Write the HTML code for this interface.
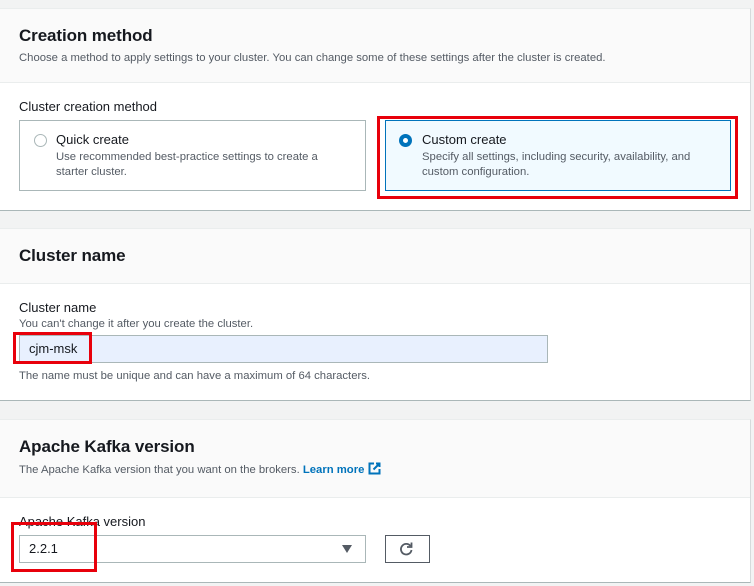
<!DOCTYPE html>
<html><head><meta charset="utf-8"><style>
*{box-sizing:border-box;margin:0;padding:0}
body{width:754px;height:586px;background:#f2f3f3;font-family:"Liberation Sans",sans-serif;color:#16191f;position:relative;overflow:hidden}
.p{position:absolute;left:0;width:751px;background:#fff;border-right:1px solid #d5dbdb;border-bottom:1px solid #aab7b8;border-top:1px solid #eaeded}
.h{background:#fafafa;border-bottom:1px solid #eaeded;position:absolute;left:0;right:0;top:0}
.t{position:absolute;left:19px;font-size:17px;font-weight:bold;letter-spacing:-0.1px}
.d{position:absolute;left:19px;font-size:11.3px;color:#545b64;white-space:nowrap}
.l{position:absolute;left:19px;font-size:13px;color:#16191f}
.a{position:absolute;white-space:nowrap}
.r{position:absolute;border:3px solid #e8000b}
</style></head><body>
<div class="p" style="top:8px;height:203px">
 <div class="h" style="height:74px"></div>
 <div class="t" style="top:17px">Creation method</div>
 <div class="d" style="top:43px">Choose a method to apply settings to your cluster. You can change some of these settings after the cluster is created.</div>
 <div class="l" style="top:90px">Cluster creation method</div>
 <div class="a" style="left:19px;top:111px;width:347px;height:71px;border:1px solid #aab7b8"></div>
 <div class="a" style="left:34px;top:125px;width:13px;height:13px;border:1px solid #aab7b8;border-radius:50%"></div>
 <div class="a" style="left:56px;top:123px;font-size:13px">Quick create</div>
 <div class="a" style="left:56px;top:141px;font-size:11.3px;color:#545b64;line-height:15px">Use recommended best-practice settings to create a<br>starter cluster.</div>
 <div class="a" style="left:385px;top:111px;width:346px;height:71px;border:1px solid #0073bb;background:#f1faff"></div>
 <div class="a" style="left:399px;top:125px;width:13px;height:13px;border:4px solid #0073bb;border-radius:50%;background:#fff"></div>
 <div class="a" style="left:422px;top:123px;font-size:13px">Custom create</div>
 <div class="a" style="left:422px;top:141px;font-size:11.3px;color:#545b64;line-height:15px">Specify all settings, including security, availability, and<br>custom configuration.</div>
</div>
<div class="r" style="left:377px;top:116px;width:361px;height:83px"></div>

<div class="p" style="top:228px;height:173px">
 <div class="h" style="height:55px"></div>
 <div class="t" style="top:17px">Cluster name</div>
 <div class="l" style="top:71px">Cluster name</div>
 <div class="d" style="top:89px">You can't change it after you create the cluster.</div>
 <div class="a" style="left:19px;top:106px;width:529px;height:28px;border:1px solid #aab7b8;background:#e8f0fe"></div>
 <div class="a" style="left:29px;top:112px;font-size:13px">cjm-msk</div>
 <div class="d" style="top:141px">The name must be unique and can have a maximum of 64 characters.</div>
</div>
<div class="r" style="left:13px;top:332px;width:79px;height:32px"></div>

<div class="p" style="top:419px;height:164px">
 <div class="h" style="height:78px"></div>
 <div class="t" style="top:17px">Apache Kafka version</div>
 <div class="d" style="top:42px">The Apache Kafka version that you want on the brokers. <b style="color:#0073bb">Learn more</b> <svg width="13" height="13" viewBox="0 0 13 13" style="vertical-align:-2px"><path d="M6 1.5H1.5v10h10V7" fill="none" stroke="#0073bb" stroke-width="2"/><path d="M8 1.5h3.5V5M11.5 1.5 5.5 7.5" fill="none" stroke="#0073bb" stroke-width="2"/></svg></div>
 <div class="l" style="top:94px">Apache Kafka version</div>
 <div class="a" style="left:19px;top:115px;width:347px;height:28px;border:1px solid #aab7b8;background:#fff"></div>
 <div class="a" style="left:29px;top:121px;font-size:13px">2.2.1</div>
 <div class="a" style="left:342px;top:125px;width:0;height:0;border-left:5px solid transparent;border-right:5px solid transparent;border-top:8px solid #545b64"></div>
 <div class="a" style="left:385px;top:115px;width:45px;height:28px;border:1px solid #545b64;background:#fff"></div>
 <svg class="a" style="left:398px;top:121px" width="16" height="16" viewBox="0 0 16 16"><path d="M12.5 5A5.3 5.3 0 1 0 13.5 9" fill="none" stroke="#545b64" stroke-width="1.8"/><path d="M13.5 1.5V6H9" fill="none" stroke="#545b64" stroke-width="1.8"/></svg>
</div>
<div class="r" style="left:11px;top:522px;width:86px;height:50px"></div>
</body></html>
